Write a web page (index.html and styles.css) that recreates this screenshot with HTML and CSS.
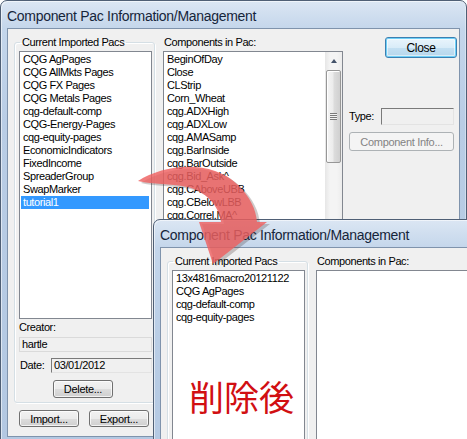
FILE: index.html
```html
<!DOCTYPE html>
<html>
<head>
<meta charset="utf-8">
<title>Component Pac Information/Management</title>
<link rel="stylesheet" href="styles.css">
</head>
<body>
<div class="desk">
  <div class="window win-main">
    <div class="titlebar">Component Pac Information/Management</div>
    <div class="client">
      <div class="col-left">
        <fieldset class="group">
          <legend>Current Imported Pacs</legend>
          <ul class="listbox pacs">
            <li>CQG AgPages</li>
            <li>CQG AllMkts Pages</li>
            <li>CQG FX Pages</li>
            <li>CQG Metals Pages</li>
            <li>cqg-default-comp</li>
            <li>CQG-Energy-Pages</li>
            <li>cqg-equity-pages</li>
            <li>EconomicIndicators</li>
            <li>FixedIncome</li>
            <li>SpreaderGroup</li>
            <li>SwapMarker</li>
            <li class="sel">tutorial1</li>
          </ul>
          <div class="lbl creator">Creator:</div>
          <div class="field ro">hartle</div>
          <div class="date-row">
            <span class="lbl">Date:</span>
            <div class="field sunken date">03/01/2012</div>
          </div>
          <button class="btn delete">Delete...</button>
        </fieldset>
        <div class="io-row">
          <button class="btn io">Import...</button>
          <button class="btn io">Export...</button>
        </div>
      </div>
      <div class="col-mid">
        <div class="lbl cap">Components in Pac:</div>
        <div class="listbox comps">
          <ul class="items">
            <li>BeginOfDay</li>
            <li>Close</li>
            <li>CLStrip</li>
            <li>Corn_Wheat</li>
            <li>cqg.ADXHigh</li>
            <li>cqg.ADXLow</li>
            <li>cqg.AMASamp</li>
            <li>cqg.BarInside</li>
            <li>cqg.BarOutside</li>
            <li>cqg.Bid_Ask^</li>
            <li>cqg.CAboveUBB</li>
            <li>cqg.CBelowLBB</li>
            <li>cqg.Correl.MA^</li>
          </ul>
          <div class="vscroll">
            <div class="sb-arrow"><span class="tri"></span></div>
            <div class="sb-thumb"><span class="grip"></span></div>
            <div class="sb-track"></div>
          </div>
        </div>
      </div>
      <div class="col-right">
        <button class="btn close">Close</button>
        <div class="type-row">
          <span class="lbl">Type:</span>
          <div class="field sunken type"></div>
        </div>
        <button class="btn info" disabled>Component Info...</button>
      </div>
    </div>
  </div>

  <div class="window win-after">
    <div class="titlebar">Component Pac Information/Management</div>
    <div class="client">
      <div class="col-left">
        <fieldset class="group">
          <legend>Current Imported Pacs</legend>
          <ul class="listbox pacs tall">
            <li>13x4816macro20121122</li>
            <li>CQG AgPages</li>
            <li>cqg-default-comp</li>
            <li>cqg-equity-pages</li>
          </ul>
        </fieldset>
      </div>
      <div class="col-mid wide">
        <div class="lbl cap">Components in Pac:</div>
        <div class="listbox comps empty"></div>
      </div>
    </div>
  </div>

  <div class="note">削除後</div>

  <svg class="arrow" width="467" height="439" viewBox="0 0 467 439">
    <path class="arrow-shadow" d="M141,183 C168,166 214,161 241,187 C253,199 259,211 260,224 L270,224 L216,266 L202,224 L224,224 C222,207 208,193 190,189 C172,185 157,187 141,183 Z"/>
    <path class="arrow-body" d="M138,181 C165,164 211,159 238,185 C250,197 256,209 257,222 L267,222 L213,264 L199,222 L221,222 C219,205 205,191 187,187 C169,183 154,185 138,181 Z"/>
  </svg>
</div>
</body>
</html>
```
FILE: styles.css
```css
* { box-sizing: border-box; }

html, body {
  margin: 0;
  padding: 0;
  background: #ffffff;
}

.desk {
  position: relative;
  width: 467px;
  height: 439px;
  overflow: hidden;
  font-family: "Liberation Sans", Arial, sans-serif;
  font-size: 11px;
  letter-spacing: -0.4px;
  color: #000;
}

/* ---------- window frame ---------- */
.window {
  display: flex;
  flex-direction: column;
  border: 1px solid #4f5f75;
  border-radius: 7px 7px 0 0;
  padding: 0 6px 6px;
  background: linear-gradient(to bottom, #dbe6f3 0px, #c4d6eb 28px, #b9cde5 120px, #b3c8e2 100%);
  box-shadow: inset 1px 1px 0 rgba(255,255,255,0.55), inset -1px 0 0 rgba(255,255,255,0.35);
}

.win-main {
  width: 467px;
  height: 444px;
}

.win-after {
  position: absolute;
  left: 153px;
  top: 219px;
  width: 330px;
  height: 240px;
}

.titlebar {
  height: 27px;
  padding: 3px 0 0 0;
  line-height: 24px;
  font-size: 14px;
  letter-spacing: -0.3px;
  color: #16253a;
  white-space: nowrap;
  overflow: hidden;
}

.client {
  flex: 1;
  display: flex;
  align-items: flex-start;
  background: #f0f0f0;
  border: 1px solid #7f93ac;
  overflow: hidden;
}

/* ---------- columns ---------- */
.col-left {
  width: 141px;
  margin-left: 6px;
  flex: none;
}

.col-mid {
  width: 180px;
  margin-left: 8px;
  padding-top: 7px;
  flex: none;
}

.col-mid.wide {
  width: 200px;
}

.col-right {
  width: 108px;
  margin-left: 6px;
  flex: none;
  display: flex;
  flex-direction: column;
  align-items: flex-start;
}

/* ---------- group box ---------- */
.group {
  margin: 7px 0 0 0;
  padding: 2px 2px 4px 4px;
  border: 1px solid #d5dfe5;
  border-radius: 3px;
  box-shadow: inset 1px 1px 0 #ffffff, 1px 1px 0 #ffffff;
  min-width: 0;
}

.group legend {
  margin-left: 1px;
  padding: 0 2px;
  line-height: 13px;
  height: 13px;
}

.lbl {
  line-height: 13px;
  white-space: nowrap;
}

.lbl.cap {
  padding-left: 1px;
}

/* ---------- list boxes ---------- */
.listbox {
  margin: 0;
  background: #ffffff;
  border: 1px solid #828790;
  list-style: none;
}

.pacs {
  width: 133px;
  height: 268px;
  padding: 1px 0 0 0;
}

.pacs.tall {
  height: 240px;
}

.listbox li,
.items li {
  height: 13px;
  line-height: 13px;
  margin: 0 2px 0 1px;
  padding-left: 2px;
  white-space: nowrap;
  overflow: hidden;
}

.listbox li.sel {
  background: #3399ff;
  color: #ffffff;
}

.comps {
  margin-top: 2px;
  height: 400px;
  display: flex;
  align-items: stretch;
}

.comps.empty {
  height: 240px;
}

.items {
  flex: 1;
  margin: 0;
  padding: 1px 0 0 0;
  list-style: none;
  overflow: hidden;
}

.items li {
  margin-left: 1px;
  padding-left: 2px;
}

/* ---------- scrollbar ---------- */
.vscroll {
  width: 17px;
  flex: none;
  display: flex;
  flex-direction: column;
  background: linear-gradient(to right, #e6e6e6, #f4f4f4 30%, #f4f4f4 70%, #ececec);
}

.sb-arrow {
  height: 18px;
  display: flex;
  align-items: center;
  justify-content: center;
}

.tri {
  width: 0;
  height: 0;
  border-left: 3px solid transparent;
  border-right: 3px solid transparent;
  border-bottom: 4px solid #44536a;
}

.sb-thumb {
  height: 93px;
  margin: 0 1px 0 1px;
  border: 1px solid #979797;
  border-radius: 2px;
  background: linear-gradient(to right, #f5f5f5, #ececec 45%, #dcdcdc 55%, #d0d0d0);
  box-shadow: inset 1px 1px 0 #ffffff;
  display: flex;
  align-items: center;
  justify-content: center;
}

.grip {
  width: 7px;
  height: 7px;
  background: repeating-linear-gradient(to bottom, #7a7a7a 0, #7a7a7a 1px, #f2f2f2 1px, #f2f2f2 2px);
}

.sb-track {
  flex: 1;
}

/* ---------- fields ---------- */
.field {
  height: 15px;
  line-height: 13px;
  padding-left: 2px;
  white-space: nowrap;
}

.field.ro {
  width: 133px;
  margin-top: 3px;
  border: 1px solid #dadada;
  background: #f0f0f0;
}

.field.sunken {
  border: 1px solid;
  border-color: #7a7a7a #e3e3e3 #e3e3e3 #7a7a7a;
  background: #f0f0f0;
}

.creator {
  margin-top: 2px;
}

.date-row {
  margin-top: 6px;
  width: 133px;
  display: flex;
  align-items: center;
  justify-content: space-between;
  padding-left: 1px;
}

.field.date {
  width: 101px;
}

.type-row {
  margin-top: 50px;
  width: 105px;
  display: flex;
  align-items: center;
  justify-content: space-between;
}

.field.type {
  width: 73px;
  height: 17px;
}

/* ---------- buttons ---------- */
.btn {
  display: block;
  font-family: "Liberation Sans", Arial, sans-serif;
  font-size: 11px;
  letter-spacing: -0.3px;
  color: #000;
  padding: 0;
  border: 1px solid #707070;
  border-radius: 3px;
  background: linear-gradient(to bottom, #f2f2f2 0%, #ebebeb 50%, #dddddd 51%, #cfcfcf 100%);
  box-shadow: inset 0 0 0 1px rgba(255,255,255,0.75);
  line-height: 14px;
}

.delete {
  width: 60px;
  height: 18px;
  margin: 7px 0 0 34px;
}

.io-row {
  display: flex;
  gap: 10px;
  margin: 7px 0 0 5px;
}

.btn.io {
  width: 60px;
  height: 17px;
}

.btn.close {
  width: 72px;
  height: 21px;
  margin: 8px 0 0 36px;
  border-color: #3c7fb1;
  background: linear-gradient(to bottom, #eaf5fc 0%, #d9ecf8 50%, #c4e0f2 51%, #b5d6ec 100%);
  box-shadow: inset 0 0 0 1px #6fd0f7, inset 0 0 0 2px rgba(255,255,255,0.5);
  font-size: 12px;
}

.btn.info {
  width: 105px;
  height: 19px;
  margin-top: 7px;
  color: #838383;
  border-color: #adb2b5;
  background: #f4f4f4;
  box-shadow: none;
}

/* ---------- annotation overlays ---------- */
.note {
  position: absolute;
  left: 189px;
  top: 378px;
  font-family: "Noto Sans CJK JP", "Noto Sans CJK SC", sans-serif;
  font-size: 35px;
  line-height: 35px;
  letter-spacing: 0;
  color: #d10f12;
}

.arrow {
  position: absolute;
  left: 0;
  top: 0;
  pointer-events: none;
}

.arrow-shadow {
  fill: rgba(60, 40, 40, 0.25);
}

.arrow-body {
  fill: rgba(238, 96, 96, 0.82);
}
```
